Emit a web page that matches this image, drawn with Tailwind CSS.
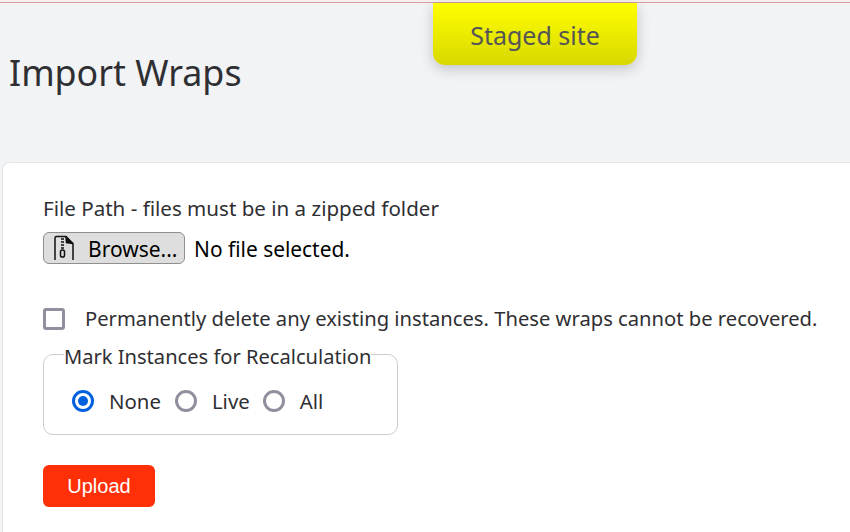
<!DOCTYPE html>
<html>
<head>
<meta charset="utf-8">
<script src="https://cdn.jsdelivr.net/npm/@tailwindcss/browser@4"></script>
</head>
<body class="m-0 h-[532px] w-[850px] overflow-hidden bg-[#f2f3f5] font-['Noto_Sans',sans-serif] text-[#2f2f33]">
  <div class="relative h-[532px] w-[850px] overflow-hidden">
    <div class="h-[3px] border-b border-[#d9a0a0] bg-[#f7f0f0]"></div>
    <div class="absolute left-[433px] top-[3px] flex h-[62px] w-[204px] items-center justify-center rounded-b-[12px] bg-linear-to-b from-[#ffff00] to-[#d8d800] pt-[4px] text-[25px] text-[#555555] shadow-[0_4px_14px_rgba(0,0,0,0.2)]">Staged site</div>
    <h1 class="h-[159px] pl-[9px] pt-[43px] text-[35.800px] leading-[52px] font-normal">Import Wraps</h1>
    <main class="ml-[2px] h-[370px] rounded-tl-[8px] border-l border-t border-[#e4e5e7] bg-white pl-[40px] pt-[30px]">
      <label class="block text-[20.570px] leading-[30px]">File Path - files must be in a zipped folder</label>
      <div class="mt-[9px] flex h-[32px] items-center">
        <button class="flex h-[32px] w-[142px] items-center rounded-[6px] border border-[#8f8f8f] bg-[#dedede] pl-[9px] text-[21px] text-black">
          <svg width="22" height="26" viewBox="0 0 22 26" fill="none" stroke="#111" stroke-width="1.5" class="mr-[13px] shrink-0"><path d="M2 25V3Q2 1.500 3.500 1.500H13L20 8.500V25"/><path d="M13 1.500L13.500 7.500L20 8.500" fill="#111"/><path d="M8 4H11M8 7H11M8 10H11M8 13H11" stroke-width="1.300"/><rect x="7.500" y="15" width="4" height="7" rx="1.800"/></svg>
          <span class="pt-[3px]">Browse...</span>
        </button>
        <span class="ml-[9px] pt-[3px] text-[20.900px] text-black">No file selected.</span>
      </div>
      <div class="mt-[40px] flex h-[30px] items-center">
        <span class="h-[22px] w-[22px] rounded-[3px] border-[3px] border-[#8f8f9d] bg-white"></span>
        <label class="ml-[20px] pb-[2px] text-[20.200px] whitespace-nowrap">Permanently delete any existing instances. These wraps cannot be recovered.</label>
      </div>
      <fieldset class="mt-[5px] h-[96px] w-[355px] min-w-0 rounded-[10px] border border-[#cccccc] px-[28px]">
        <legend class="-ml-[8px] pt-[6px] text-[20.100px] leading-[24px] whitespace-nowrap">Mark Instances for Recalculation</legend>
        <div class="mt-[17px] flex h-[30px] items-center text-[20.400px]">
          <span class="flex h-[22px] w-[22px] items-center justify-center rounded-full border-[3px] border-[#0060df] bg-white"><span class="h-[10px] w-[10px] rounded-full bg-[#0060df]"></span></span>
          <span class="ml-[15px]">None</span>
          <span class="ml-[14px] h-[22px] w-[22px] rounded-full border-[3px] border-[#8f8f9d] bg-white"></span>
          <span class="ml-[15px]">Live</span>
          <span class="ml-[13px] h-[22px] w-[22px] rounded-full border-[3px] border-[#8f8f9d] bg-white"></span>
          <span class="ml-[15px]">All</span>
        </div>
      </fieldset>
      <button class="mt-[30px] block h-[42px] w-[112px] rounded-[6px] bg-[#ff3008] font-['Liberation_Sans',sans-serif] text-[20px] text-white">Upload</button>
    </main>
  </div>
</body>
</html>
